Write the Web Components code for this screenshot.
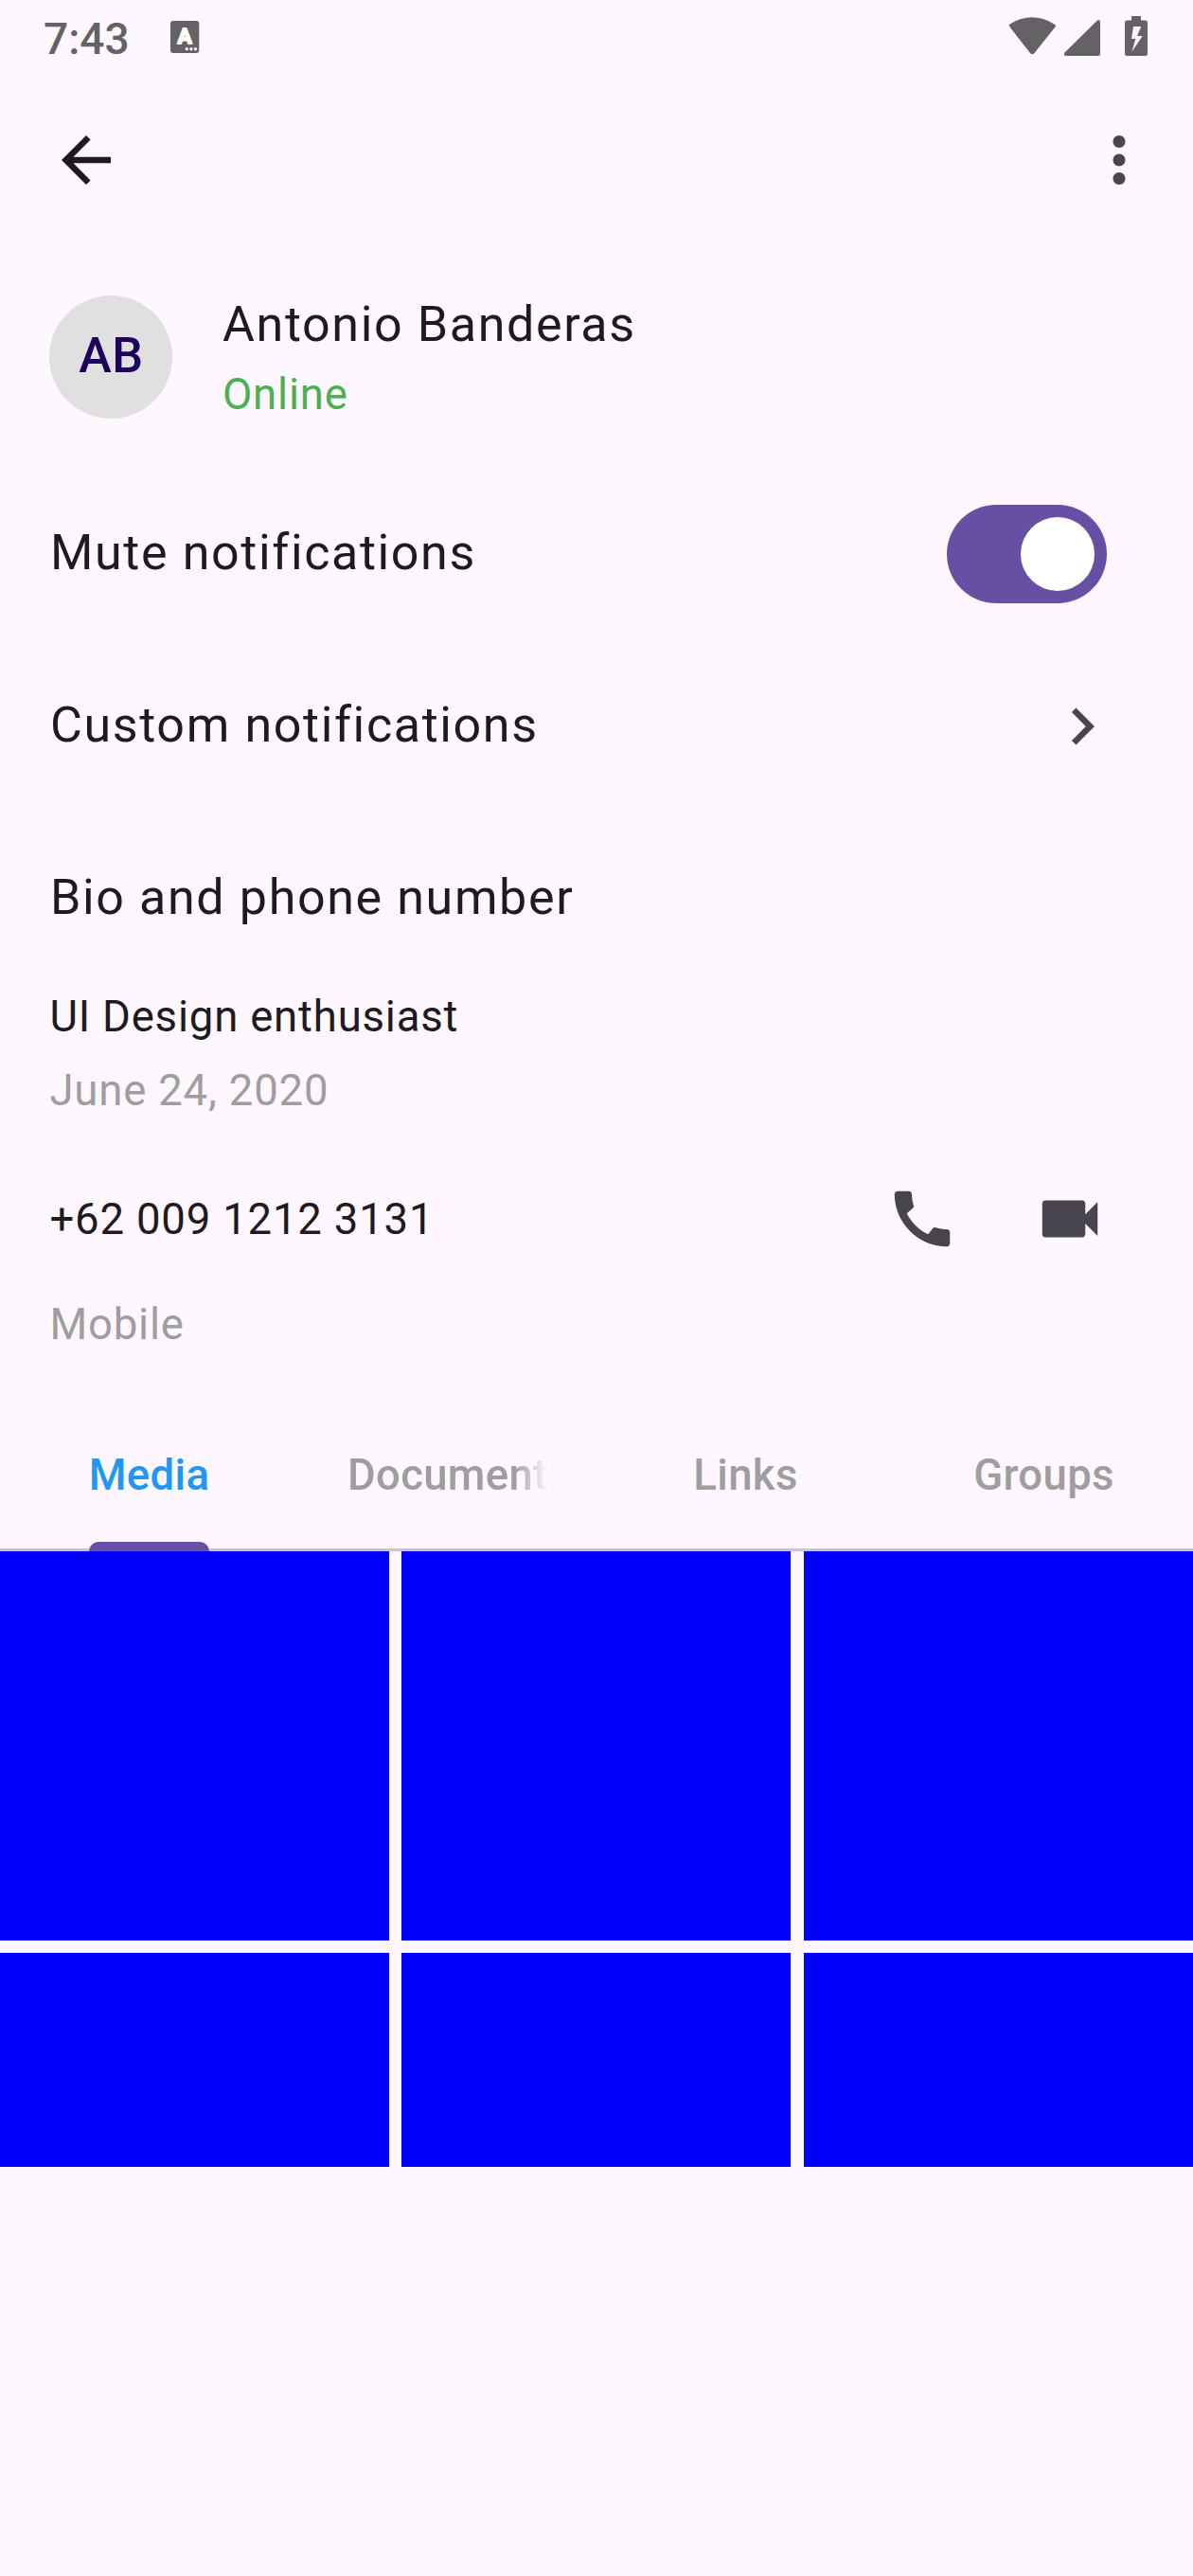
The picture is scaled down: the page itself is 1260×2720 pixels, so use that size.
<!DOCTYPE html>
<html lang="en">
<head>
<meta charset="utf-8">
<title>Contact</title>
<style>
html,body{margin:0;background:#FEF7FF}
body{font-family:Roboto,"Liberation Sans",sans-serif;color:#1D1B20}
</style>
</head>
<body>
<contact-screen></contact-screen>
<script>
function define(name, html) {
  const t = document.createElement('template');
  t.innerHTML = html;
  customElements.define(name, class extends HTMLElement {
    constructor() {
      super();
      this.attachShadow({ mode: 'open' }).appendChild(t.content.cloneNode(true));
    }
  });
}

const ICONS = {
  back: 'M20 11H7.83l5.59-5.59L12 4l-8 8 8 8 1.41-1.41L7.83 13H20v-2z',
  more: 'M12 8c1.1 0 2-.9 2-2s-.9-2-2-2-2 .9-2 2 .9 2 2 2zm0 2c-1.1 0-2 .9-2 2s.9 2 2 2 2-.9 2-2-.9-2-2-2zm0 6c-1.1 0-2 .9-2 2s.9 2 2 2 2-.9 2-2-.9-2-2-2z',
  chevron: 'M10 6L8.59 7.41 13.17 12l-4.58 4.59L10 18l6-6z',
  call: 'M20.01 15.38c-1.23 0-2.42-.2-3.53-.56-.35-.12-.74-.03-1.01.24l-1.57 1.97c-2.83-1.35-5.48-3.9-6.89-6.83l1.95-1.66c.27-.28.35-.67.24-1.02-.37-1.11-.56-2.3-.56-3.53 0-.54-.45-.99-.99-.99H4.19C3.65 3 3 3.24 3 3.99 3 13.28 10.73 21 20.01 21c.71 0 .99-.63.99-1.18v-3.45c0-.54-.45-.99-.99-.99z',
  video: 'M17 10.5V7c0-.55-.45-1-1-1H4c-.55 0-1 .45-1 1v10c0 .55.45 1 1 1h12c.55 0 1-.45 1-1v-3.5l4 4v-11l-4 4z'
};
customElements.define('m-icon', class extends HTMLElement {
  connectedCallback() {
    if (this.shadowRoot) return;
    this.attachShadow({ mode: 'open' }).innerHTML =
      `<style>:host{display:block;flex:none;width:78px;height:78px;color:#49454F}svg{display:block}</style>
       <svg width="78" height="78" viewBox="0 0 24 24" fill="currentColor"><path d="${ICONS[this.getAttribute('name')]}"/></svg>`;
  }
});

define('status-bar', `
<style>
:host{display:flex;height:78px;box-sizing:border-box;padding:0 48px 0 46px;color:#646265;align-items:flex-start}
.time{font-size:46px;font-weight:500;line-height:54px;padding-top:14px;width:134px;letter-spacing:0}
.gap{flex:1}
svg{display:block;flex:none}
</style>
<div class="time">7:43</div>
<svg width="31" height="78" viewBox="0 0 31 78"><rect x="0" y="22" width="30.300" height="34" rx="3" fill="#646265"/>
<text x="15" y="46" text-anchor="middle" font-size="22.500" font-weight="700" fill="#fff" stroke="#fff" stroke-width="1.800" stroke-linejoin="round">A</text>
<g fill="#fff"><circle cx="17.300" cy="51.800" r="1.700"/><circle cx="21.900" cy="51.800" r="1.700"/><circle cx="26.500" cy="51.800" r="1.700"/></g></svg>
<div class="gap"></div>
<svg width="148" height="78" viewBox="0 0 148 78" fill="#646265">
<path d="M2.700 28.700Q1 26.600 3 25.200C17 16 35 16 49 25.200Q52 26.600 50.300 28.700L28.500 56Q26.300 58.600 24 56Z"/>
<path d="M95 21.400Q98 20 98 23.500V56.500Q98 59 95.500 59H62Q58.800 59 60.500 55.500Z"/>
<path fill-rule="evenodd" d="M131 17h10v4.500h4.500Q148 21.500 148 24v32.500Q148 59 145.500 59h-19Q124 59 124 56.500V24Q124 21.500 126.500 21.500H131zM133 28L131 41h4.300L131.500 54.500L142.700 38H137L141.200 28z"/>
</svg>`);

define('app-bar', `
<style>:host{display:flex;justify-content:space-between;align-items:center;height:182px;box-sizing:border-box;padding:0 39px 0 52px}
.back{color:#1D1B20}</style>
<m-icon class="back" name="back"></m-icon><m-icon name="more"></m-icon>`);

define('profile-header', `
<style>
:host{display:flex;align-items:flex-start;gap:53px;height:234px;box-sizing:border-box;padding:47px 52px 0}
.avatar{width:130px;height:130px;margin-top:5px;border-radius:50%;background:#E0E0E0;color:#21005D;display:flex;align-items:center;justify-content:center;font-size:52px;font-weight:500;line-height:74px;letter-spacing:.49px}
.avatar span{padding-bottom:3px;padding-left:1px}
.name{font-size:52px;letter-spacing:1.625px;line-height:72px}
.state{font-size:45.5px;letter-spacing:.8125px;line-height:76px;color:#4CAF50}
</style>
<div class="avatar"><span><slot name="initials"></slot></span></div>
<div><div class="name"><slot></slot></div><div class="state"><slot name="state"></slot></div></div>`);

define('setting-row', `
<style>
:host{display:flex;align-items:center;justify-content:space-between;height:182px;box-sizing:border-box;padding:0 78px 0 53px}
.label{font-size:52px;letter-spacing:1.625px;line-height:78px;padding-bottom:2px}
</style>
<div class="label"><slot></slot></div><slot name="end"></slot>`);

define('m-switch', `
<style>:host{display:flex;justify-content:flex-end;width:169px;height:104px;box-sizing:border-box;padding:13px;border-radius:52px;background:#6750A4;margin-right:13px}
i{display:block;width:78px;height:78px;border-radius:50%;background:#fff}</style><i></i>`);

define('bio-block', `
<style>
:host{display:block;padding:0 52px 0 52.4px;font-size:45.5px;letter-spacing:.8125px}
.bio{line-height:68px}.date{line-height:88px}.muted{color:#9E9E9E}
.row{display:flex;align-items:center;height:156px;margin-top:13px}
.num{flex:1;line-height:78px;padding-top:2px}
.btn{width:156px;height:156px;display:flex;align-items:center;justify-content:center}
.kind{line-height:67px}
</style>
<div class="bio"><slot name="bio"></slot></div>
<div class="date muted"><slot name="date"></slot></div>
<div class="row"><div class="num"><slot name="phone"></slot></div>
<div class="btn"><m-icon name="call"></m-icon></div><div class="btn"><m-icon name="video"></m-icon></div></div>
<div class="kind muted"><slot name="kind"></slot></div>`);

define('m-tab', `
<style>
:host{display:flex;flex:1 1 0;min-width:0;height:156px;box-sizing:border-box;padding:0 52px;justify-content:center;color:#9E9E9E;font-size:45.5px;font-weight:500;letter-spacing:.325px;line-height:78px}
:host([active]){color:#2196F3}
.in{display:flex;flex-direction:column;min-width:0}
.label{padding-top:37px;height:109px;box-sizing:border-box;white-space:nowrap;overflow:hidden}
:host([fade]) .label{-webkit-mask-image:linear-gradient(to right,#000 calc(100% - 34px),transparent)}
.bar{height:10px;border-radius:10px 10px 0 0;margin-top:37px}
:host([active]) .bar{background:#6750A4}
</style>
<div class="in"><div class="label"><slot></slot></div><div class="bar"></div></div>`);

define('tab-strip', `
<style>:host{display:flex;margin-top:50px;height:156px;background:linear-gradient(#CAC4D0,#CAC4D0) bottom/100% 3.25px no-repeat}</style><slot></slot>`);

define('media-grid', `
<style>:host{display:grid;grid-template-columns:424px 425px 411px;grid-template-rows:411px 411px;row-gap:13px;height:650px;overflow:hidden}
i{background:#00f}
i:nth-of-type(3n+1){margin-right:13px}
i:nth-of-type(3n+2){margin-right:14px}</style><i></i><i></i><i></i><i></i><i></i><i></i>`);

define('contact-screen', `
<style>:host{display:flex;flex-direction:column;width:1260px;height:2720px;overflow:hidden;background:#FEF7FF}</style>
<status-bar></status-bar>
<app-bar></app-bar>
<profile-header><span slot="initials">AB</span>Antonio Banderas<span slot="state">Online</span></profile-header>
<setting-row>Mute notifications<m-switch slot="end"></m-switch></setting-row>
<setting-row>Custom notifications<m-icon slot="end" name="chevron"></m-icon></setting-row>
<setting-row>Bio and phone number</setting-row>
<bio-block><span slot="bio">UI Design enthusiast</span><span slot="date">June 24, 2020</span><span slot="phone">+62 009 1212 3131</span><span slot="kind">Mobile</span></bio-block>
<tab-strip><m-tab active>Media</m-tab><m-tab fade>Documents</m-tab><m-tab>Links</m-tab><m-tab>Groups</m-tab></tab-strip>
<media-grid></media-grid>`);
</script>
</body>
</html>
